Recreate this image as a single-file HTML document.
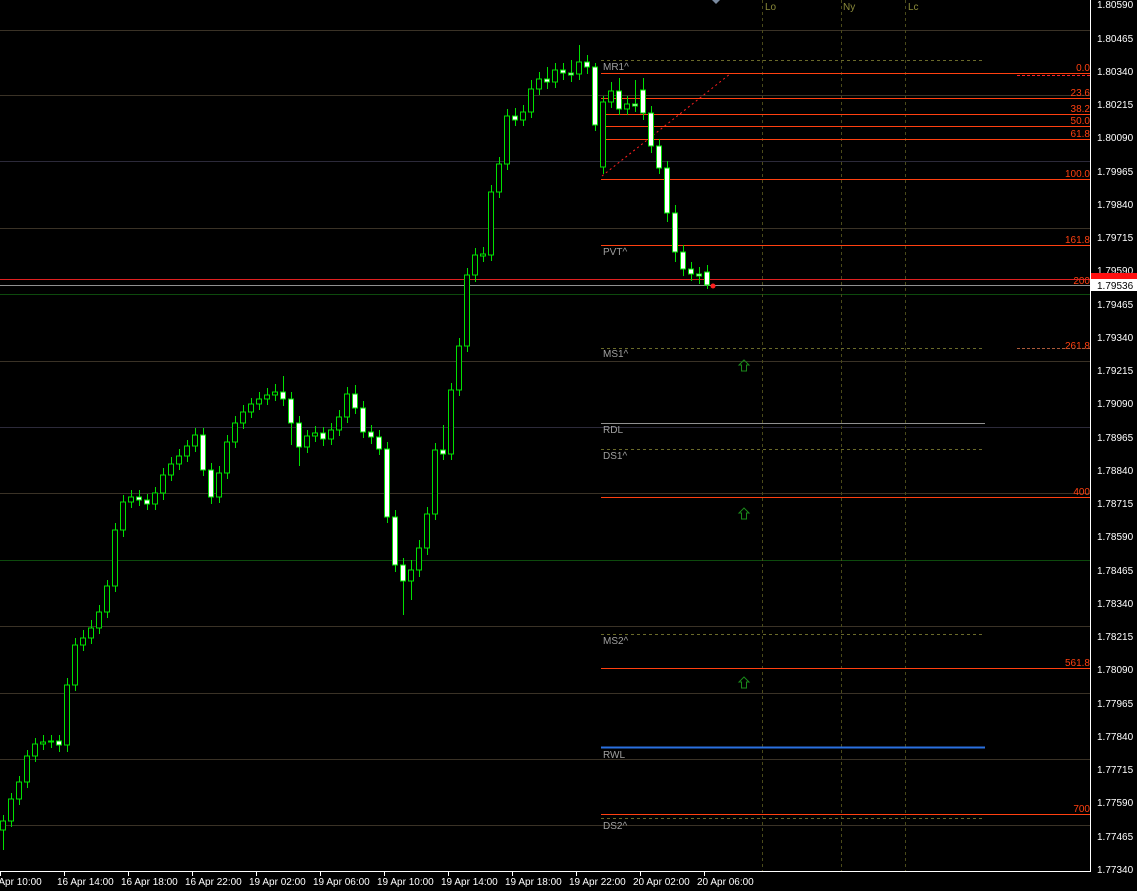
<!DOCTYPE html>
<html><head><meta charset="utf-8"><style>
html,body{margin:0;padding:0;background:#000;width:1137px;height:891px;overflow:hidden}
svg{display:block}
text{font-family:"Liberation Sans",sans-serif;font-size:10px}
</style></head><body>
<svg width="1137" height="891" viewBox="0 0 1137 891" xmlns="http://www.w3.org/2000/svg">
<rect width="1137" height="891" fill="#000"/>
<g stroke-width="1">
<line x1="0" x2="1090" y1="30.5" y2="30.5" stroke="#3a3226"/>
<line x1="0" x2="1090" y1="95.5" y2="95.5" stroke="#3a3226"/>
<line x1="0" x2="1090" y1="161.5" y2="161.5" stroke="#2c2a3a"/>
<line x1="0" x2="1090" y1="228.5" y2="228.5" stroke="#3a3226"/>
<line x1="0" x2="1090" y1="294.5" y2="294.5" stroke="#0d4a0d"/>
<line x1="0" x2="1090" y1="361.5" y2="361.5" stroke="#3a3226"/>
<line x1="0" x2="1090" y1="427.5" y2="427.5" stroke="#2c2a3a"/>
<line x1="0" x2="1090" y1="493.5" y2="493.5" stroke="#3a3226"/>
<line x1="0" x2="1090" y1="560.5" y2="560.5" stroke="#0d4a0d"/>
<line x1="0" x2="1090" y1="626.5" y2="626.5" stroke="#3a3226"/>
<line x1="0" x2="1090" y1="693.5" y2="693.5" stroke="#3a3226"/>
<line x1="0" x2="1090" y1="759.5" y2="759.5" stroke="#3a3226"/>
<line x1="0" x2="1090" y1="825.5" y2="825.5" stroke="#3a3226"/>
<line x1="762.5" x2="762.5" y1="0" y2="871" stroke="#4a4a1a" stroke-dasharray="3,3"/>
<line x1="841.5" x2="841.5" y1="0" y2="871" stroke="#4a4a1a" stroke-dasharray="3,3"/>
<line x1="905.5" x2="905.5" y1="0" y2="871" stroke="#4a4a1a" stroke-dasharray="3,3"/>
</g>
<text x="765" y="10" fill="#8a8a3a">Lo</text>
<text x="843" y="10" fill="#8a8a3a">Ny</text>
<text x="908" y="10" fill="#8a8a3a">Lc</text>
<path d="M712 0 L720 0 L716 4 Z" fill="#7a8aa0"/>

<g shape-rendering="crispEdges">
<line x1="601" x2="1090" y1="73.5" y2="73.5" stroke="#ff4010"/>
<line x1="601" x2="1090" y1="98.5" y2="98.5" stroke="#ff4010"/>
<line x1="601" x2="1090" y1="114.5" y2="114.5" stroke="#ff4010"/>
<line x1="601" x2="1090" y1="126.5" y2="126.5" stroke="#ff4010"/>
<line x1="601" x2="1090" y1="139.5" y2="139.5" stroke="#ff4010"/>
<line x1="601" x2="1090" y1="179.5" y2="179.5" stroke="#ff4010"/>
<line x1="601" x2="1090" y1="245.5" y2="245.5" stroke="#ff4010"/>
<line x1="601" x2="1090" y1="497.5" y2="497.5" stroke="#ff4010"/>
<line x1="601" x2="1090" y1="668.5" y2="668.5" stroke="#ff4010"/>
<line x1="601" x2="1090" y1="814.5" y2="814.5" stroke="#ff4010"/>
</g>
<g fill="#ff4010" text-anchor="end">
<text x="1090" y="71">0.0</text>
<text x="1090" y="96">23.6</text>
<text x="1090" y="112">38.2</text>
<text x="1090" y="124">50.0</text>
<text x="1090" y="137">61.8</text>
<text x="1090" y="177">100.0</text>
<text x="1090" y="243">161.8</text>
<text x="1090" y="284">200</text>
<text x="1090" y="349">261.8</text>
<text x="1090" y="495">400</text>
<text x="1090" y="666">561.8</text>
<text x="1090" y="812">700</text>
</g>
<line x1="1017" x2="1090" y1="348.5" y2="348.5" stroke="#aa5a3a" stroke-dasharray="3,2"/>
<line x1="1017" x2="1090" y1="75.5" y2="75.5" stroke="#ff2020" stroke-dasharray="3,2"/>
<line x1="0" x2="1090" y1="279.5" y2="279.5" stroke="#e02020"/>
<line x1="0" x2="1090" y1="285.5" y2="285.5" stroke="#909090"/>
<line x1="602" x2="730" y1="176" y2="74" stroke="#ff2020" stroke-dasharray="2,3"/>
<g stroke="#6a6a2a" stroke-dasharray="3,3">
<line x1="601" x2="985" y1="60.5" y2="60.5"/>
<line x1="601" x2="985" y1="348.5" y2="348.5"/>
<line x1="601" x2="985" y1="449.5" y2="449.5"/>
<line x1="601" x2="985" y1="634.5" y2="634.5"/>
<line x1="601" x2="985" y1="818.5" y2="818.5"/>
</g>
<line x1="601" x2="985" y1="423.5" y2="423.5" stroke="#909090"/>
<line x1="601" x2="985" y1="747.5" y2="747.5" stroke="#2a70e0" stroke-width="2"/>
<g fill="#a0a0a0">
<text x="603" y="70">MR1^</text>
<text x="603" y="255">PVT^</text>
<text x="603" y="357">MS1^</text>
<text x="603" y="433">RDL</text>
<text x="603" y="459">DS1^</text>
<text x="603" y="644">MS2^</text>
<text x="603" y="758">RWL</text>
<text x="603" y="829">DS2^</text>
</g>
<g fill="none" stroke="#1a8a1a">
<path d="M744 360 L749 365 L746.5 365 L746.5 371 L741.5 371 L741.5 365 L739 365 Z"/>
<path d="M744 508 L749 513 L746.5 513 L746.5 519 L741.5 519 L741.5 513 L739 513 Z"/>
<path d="M744 677 L749 682 L746.5 682 L746.5 688 L741.5 688 L741.5 682 L739 682 Z"/>
</g>

<path fill="none" stroke="#00e000" d="M3.5 815V850M11.5 793V827M19.5 776V805M27.5 750V788M35.5 738V762M43.5 735V750M51.5 735V748M59.5 735V752M67.5 678V752M75.5 638V691M83.5 630V651M91.5 620V644M99.5 605V634M107.5 580V618M115.5 523V592M123.5 495V537M131.5 490V508M139.5 490V506M147.5 494V510M155.5 487V510M163.5 468V500M171.5 457V481M179.5 449V470M187.5 440V462M195.5 428V452M203.5 428V476M211.5 463V504M219.5 466V503M227.5 435V479M235.5 416V448M243.5 405V429M251.5 398V418M259.5 392V410M267.5 388V405M275.5 384V401M283.5 376V406M291.5 392V445M299.5 416V466M307.5 430V453M315.5 426V442M323.5 427V446M331.5 423V445M339.5 410V436M347.5 387V423M355.5 385V414M363.5 401V438M371.5 425V444M379.5 430V455M387.5 442V523M395.5 510V572M403.5 558V615M411.5 560V600M419.5 540V577M427.5 507V555M435.5 443V520M443.5 425V460M451.5 383V460M459.5 338V396M467.5 268V352M475.5 248V282M483.5 247V262M491.5 185V261M499.5 157V198M507.5 109V170M515.5 108V126M523.5 105V126M531.5 80V118M539.5 72V95M547.5 67V89M555.5 63V88M563.5 63V80M571.5 60V82M579.5 45V80M587.5 55V74M595.5 63V131M603.5 96V174M611.5 82V108M619.5 78V115M627.5 96V115M635.5 80V112M643.5 78V120M651.5 106V153M659.5 139V174M667.5 161V222M675.5 205V262M683.5 245V276M691.5 262V281M699.5 267V284M707.5 265V289"/>
<g stroke="#00e000">
<g fill="#000">
<rect x="0.5" y="821" width="5" height="9"/><rect x="8.5" y="799" width="5" height="22"/><rect x="16.5" y="782" width="5" height="17"/><rect x="24.5" y="756" width="5" height="26"/><rect x="32.5" y="744" width="5" height="12"/><rect x="40.5" y="742" width="5" height="2"/><rect x="48.5" y="741" width="5" height="1"/><rect x="64.5" y="685" width="5" height="60"/><rect x="72.5" y="645" width="5" height="40"/><rect x="80.5" y="638" width="5" height="7"/><rect x="88.5" y="628" width="5" height="10"/><rect x="96.5" y="612" width="5" height="16"/><rect x="104.5" y="586" width="5" height="26"/><rect x="112.5" y="530" width="5" height="56"/><rect x="120.5" y="502" width="5" height="28"/><rect x="128.5" y="497" width="5" height="5"/><rect x="152.5" y="493" width="5" height="11"/><rect x="160.5" y="475" width="5" height="18"/><rect x="168.5" y="464" width="5" height="11"/><rect x="176.5" y="456" width="5" height="8"/><rect x="184.5" y="446" width="5" height="10"/><rect x="192.5" y="435" width="5" height="11"/><rect x="216.5" y="473" width="5" height="24"/><rect x="224.5" y="442" width="5" height="31"/><rect x="232.5" y="423" width="5" height="19"/><rect x="240.5" y="412" width="5" height="11"/><rect x="248.5" y="404" width="5" height="8"/><rect x="256.5" y="399" width="5" height="5"/><rect x="264.5" y="395" width="5" height="4"/><rect x="272.5" y="392" width="5" height="3"/><rect x="304.5" y="436" width="5" height="11"/><rect x="312.5" y="433" width="5" height="3"/><rect x="328.5" y="430" width="5" height="9"/><rect x="336.5" y="417" width="5" height="13"/><rect x="344.5" y="394" width="5" height="23"/><rect x="408.5" y="570" width="5" height="11"/><rect x="416.5" y="548" width="5" height="22"/><rect x="424.5" y="514" width="5" height="34"/><rect x="432.5" y="450" width="5" height="64"/><rect x="448.5" y="390" width="5" height="64"/><rect x="456.5" y="346" width="5" height="44"/><rect x="464.5" y="275" width="5" height="71"/><rect x="472.5" y="255" width="5" height="20"/><rect x="480.5" y="254" width="5" height="2"/><rect x="488.5" y="192" width="5" height="63"/><rect x="496.5" y="164" width="5" height="28"/><rect x="504.5" y="116" width="5" height="48"/><rect x="520.5" y="112" width="5" height="8"/><rect x="528.5" y="89" width="5" height="23"/><rect x="536.5" y="79" width="5" height="10"/><rect x="552.5" y="70" width="5" height="12"/><rect x="576.5" y="62" width="5" height="12"/><rect x="600.5" y="102" width="5" height="65"/><rect x="608.5" y="91" width="5" height="11"/><rect x="624.5" y="104" width="5" height="5"/>
</g>
<g fill="#fff">
<rect x="56.5" y="741" width="5" height="4"/><rect x="136.5" y="497" width="5" height="3"/><rect x="144.5" y="500" width="5" height="4"/><rect x="200.5" y="435" width="5" height="35"/><rect x="208.5" y="470" width="5" height="27"/><rect x="280.5" y="392" width="5" height="7"/><rect x="288.5" y="399" width="5" height="24"/><rect x="296.5" y="423" width="5" height="24"/><rect x="320.5" y="433" width="5" height="6"/><rect x="352.5" y="394" width="5" height="14"/><rect x="360.5" y="408" width="5" height="24"/><rect x="368.5" y="432" width="5" height="5"/><rect x="376.5" y="437" width="5" height="12"/><rect x="384.5" y="449" width="5" height="68"/><rect x="392.5" y="517" width="5" height="48"/><rect x="400.5" y="565" width="5" height="16"/><rect x="440.5" y="450" width="5" height="4"/><rect x="512.5" y="116" width="5" height="4"/><rect x="544.5" y="79" width="5" height="3"/><rect x="560.5" y="70" width="5" height="3"/><rect x="568.5" y="73" width="5" height="2"/><rect x="584.5" y="62" width="5" height="5"/><rect x="592.5" y="67" width="5" height="58"/><rect x="616.5" y="91" width="5" height="18"/><rect x="632.5" y="104" width="5" height="2"/><rect x="640.5" y="90" width="5" height="23"/><rect x="648.5" y="113" width="5" height="33"/><rect x="656.5" y="146" width="5" height="22"/><rect x="664.5" y="168" width="5" height="45"/><rect x="672.5" y="213" width="5" height="39"/><rect x="680.5" y="252" width="5" height="17"/><rect x="688.5" y="269" width="5" height="5"/><rect x="696.5" y="274" width="5" height="2"/><rect x="704.5" y="272" width="5" height="13"/>
</g>
</g>
<circle cx="713" cy="286" r="2.5" fill="#ff2020"/>

<rect x="1091" y="0" width="46" height="891" fill="#000"/>
<rect x="0" y="872" width="1137" height="19" fill="#000"/>
<line x1="1090.5" x2="1090.5" y1="0" y2="872" stroke="#fff"/>
<line x1="0" x2="1091" y1="871.5" y2="871.5" stroke="#fff"/>
<g fill="#fff">
<text x="1097" y="8">1.80590</text>
<text x="1097" y="42">1.80465</text>
<text x="1097" y="75">1.80340</text>
<text x="1097" y="108">1.80215</text>
<text x="1097" y="141">1.80090</text>
<text x="1097" y="175">1.79965</text>
<text x="1097" y="208">1.79840</text>
<text x="1097" y="241">1.79715</text>
<text x="1097" y="274">1.79590</text>
<text x="1097" y="308">1.79465</text>
<text x="1097" y="341">1.79340</text>
<text x="1097" y="374">1.79215</text>
<text x="1097" y="407">1.79090</text>
<text x="1097" y="441">1.78965</text>
<text x="1097" y="474">1.78840</text>
<text x="1097" y="507">1.78715</text>
<text x="1097" y="540">1.78590</text>
<text x="1097" y="574">1.78465</text>
<text x="1097" y="607">1.78340</text>
<text x="1097" y="640">1.78215</text>
<text x="1097" y="673">1.78090</text>
<text x="1097" y="707">1.77965</text>
<text x="1097" y="740">1.77840</text>
<text x="1097" y="773">1.77715</text>
<text x="1097" y="806">1.77590</text>
<text x="1097" y="840">1.77465</text>
<text x="1097" y="873">1.77340</text>
</g>
<rect x="1091" y="273" width="46" height="8" fill="#ff1010"/>
<rect x="1091" y="279" width="46" height="12" fill="#fff"/>
<text x="1097" y="289" fill="#000">1.79536</text>
<g stroke="#fff">
<path d="M0.5 872V876M64.5 872V876M128.5 872V876M192.5 872V876M256.5 872V876M320.5 872V876M384.5 872V876M448.5 872V876M512.5 872V876M576.5 872V876M640.5 872V876M704.5 872V876"/>
</g>
<g fill="#fff" style="font-size:9.5px">
<text x="-15" y="885">16 Apr 10:00</text>
<text x="57" y="885">16 Apr 14:00</text>
<text x="121" y="885">16 Apr 18:00</text>
<text x="185" y="885">16 Apr 22:00</text>
<text x="249" y="885">19 Apr 02:00</text>
<text x="313" y="885">19 Apr 06:00</text>
<text x="377" y="885">19 Apr 10:00</text>
<text x="441" y="885">19 Apr 14:00</text>
<text x="505" y="885">19 Apr 18:00</text>
<text x="569" y="885">19 Apr 22:00</text>
<text x="633" y="885">20 Apr 02:00</text>
<text x="697" y="885">20 Apr 06:00</text>
</g>
</svg>
</body></html>
